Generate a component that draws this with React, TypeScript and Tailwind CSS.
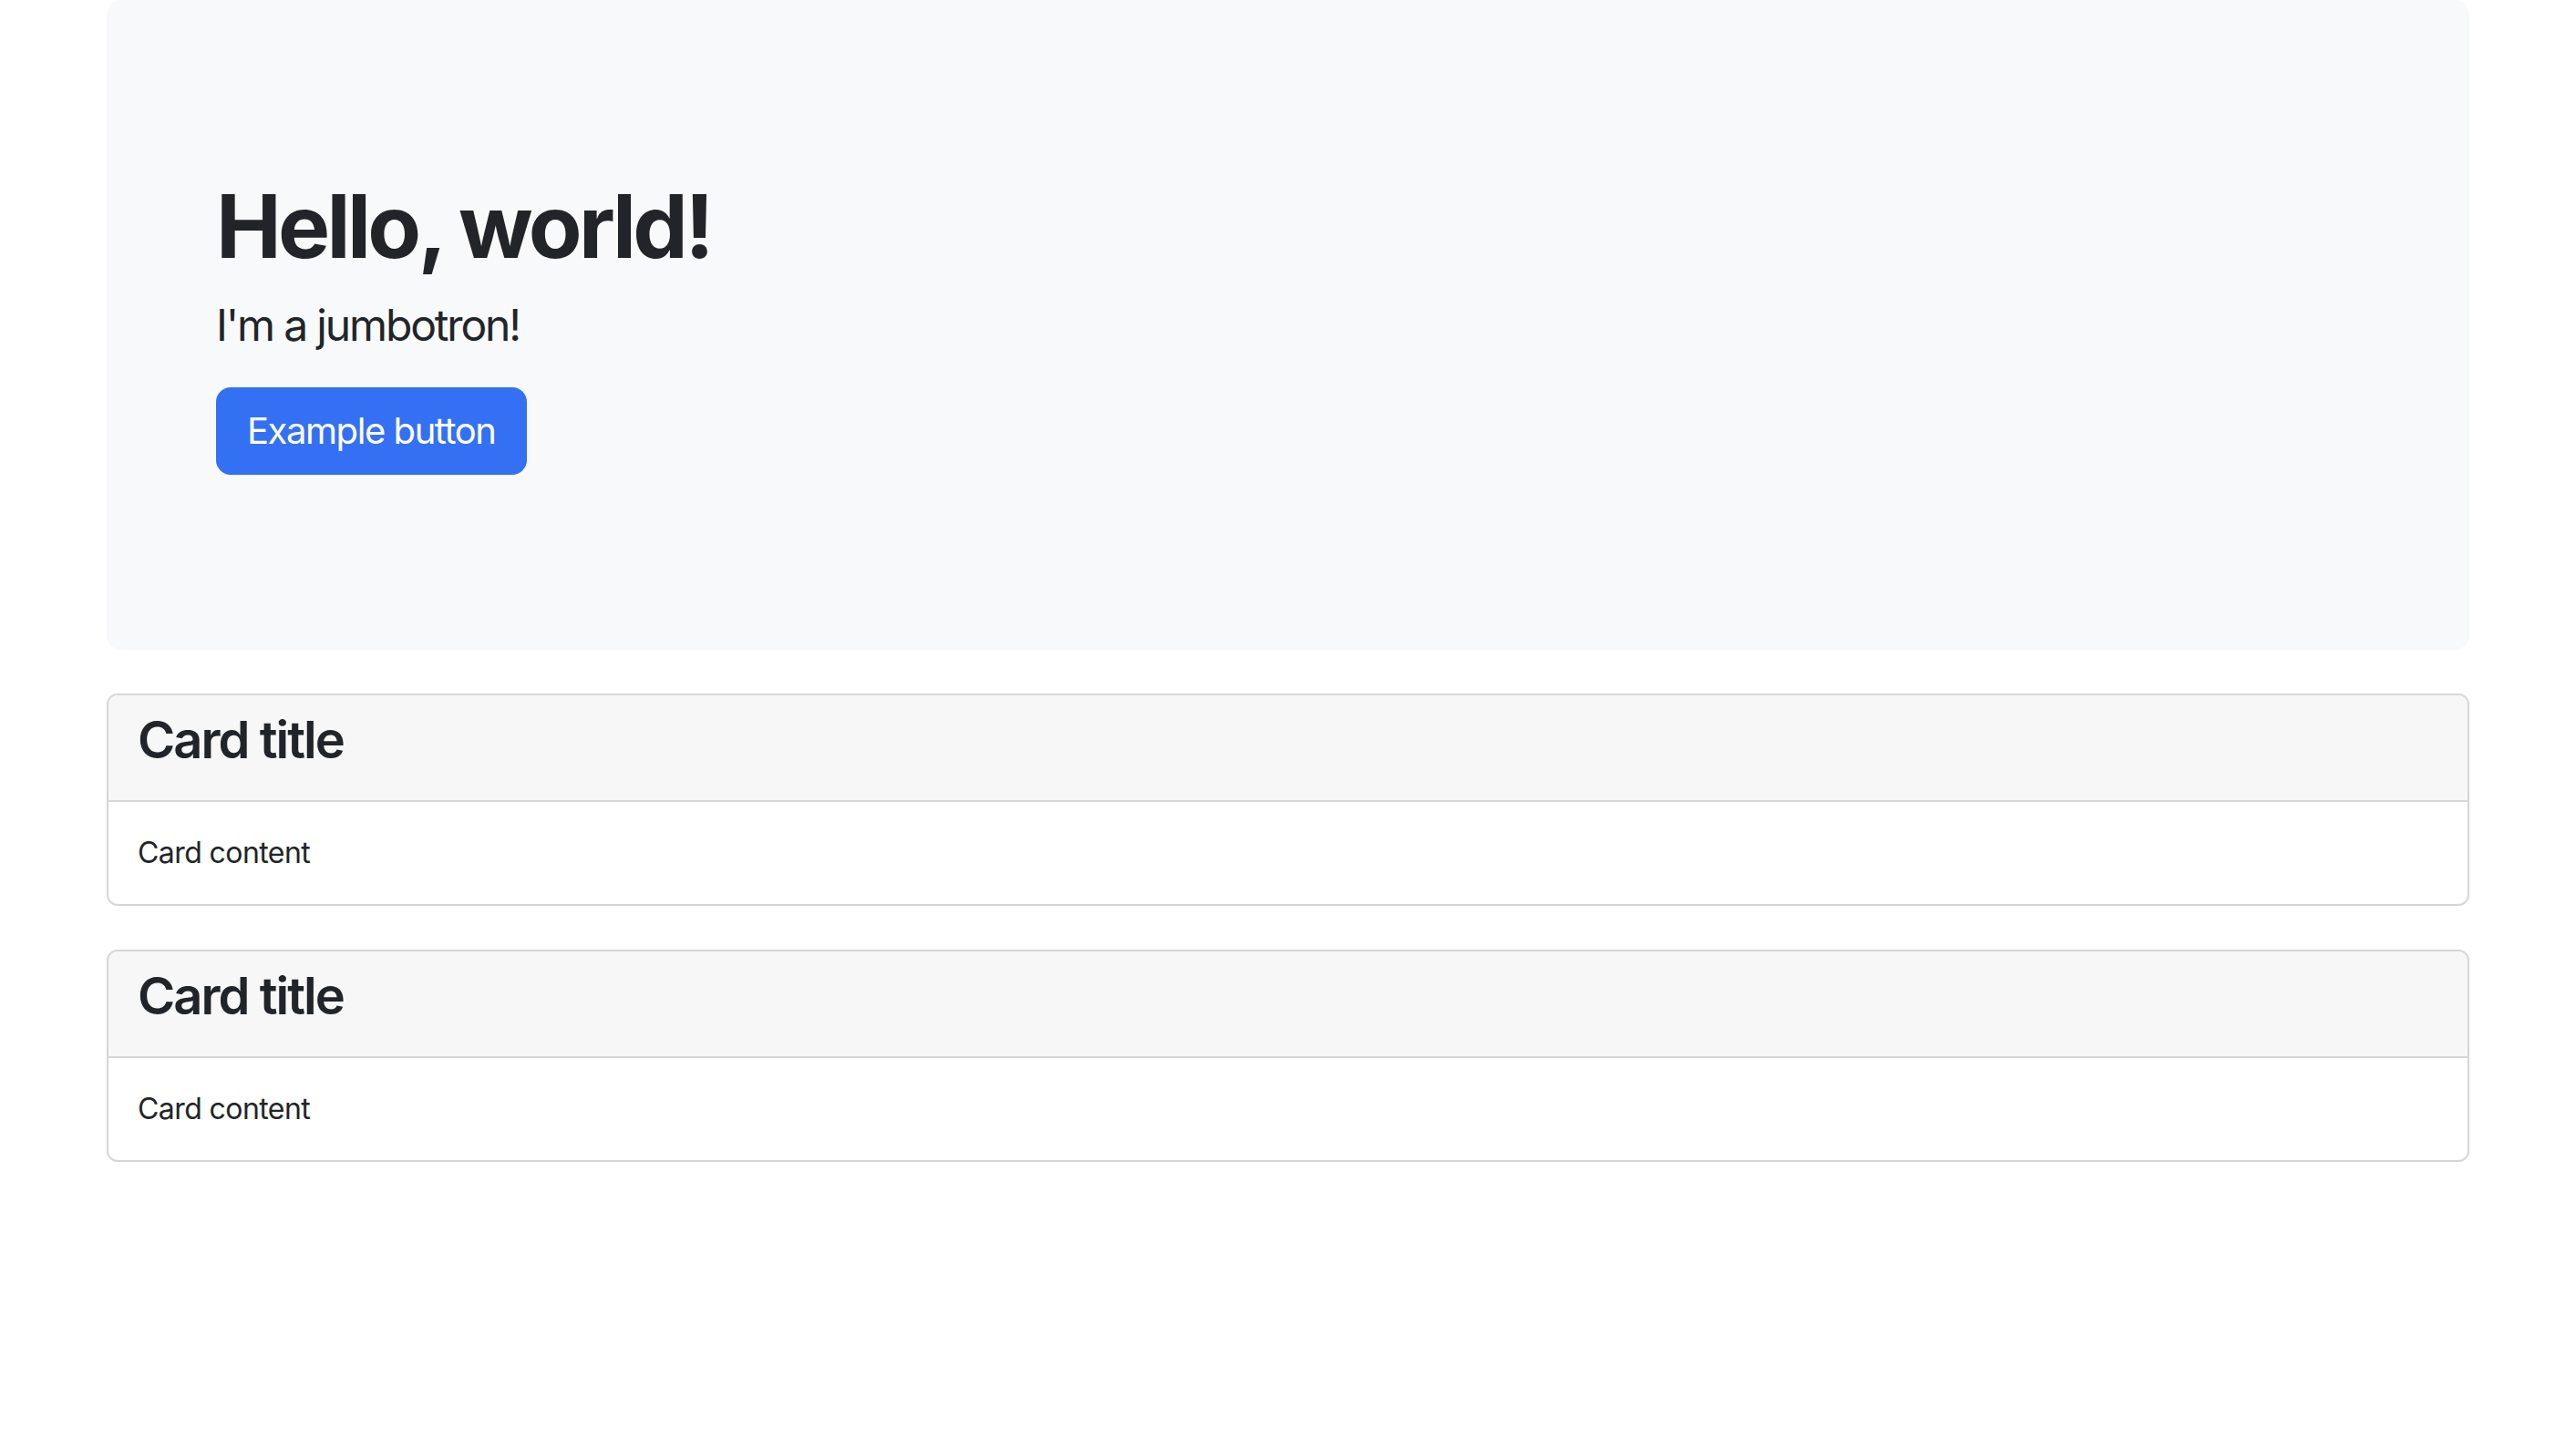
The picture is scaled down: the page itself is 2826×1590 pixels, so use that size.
export default function App() {
  const cards = ['Card title', 'Card title']

  return (
    <div className="min-h-screen bg-white text-[#212529] font-['Inter','Noto_Sans',sans-serif]">
      <div className="mx-auto w-[2640px] px-6">
        {/* jumbotron */}
        <div className="mb-12 rounded-2xl bg-[#f8f9fa] p-24">
          <div className="px-6 py-24">
            <h1 className="mb-4 text-[96px] leading-[113px] font-bold tracking-[-0.038em]">Hello, world!</h1>
            <p className="mb-8 text-[48px] leading-[1.5] tracking-[-0.045em]">I'm a jumbotron!</p>
            <button
              type="button"
              className="rounded-2xl border-2 border-[#3470f4] bg-[#3470f4] px-8 py-4 text-[40px] leading-[1.5] tracking-[-0.036em] text-white"
            >
              Example button
            </button>
          </div>
        </div>

        {cards.map((title, i) => (
          <div key={i} className="mb-12 overflow-hidden rounded-xl border-2 border-[#d6d6d6]">
            <div className="border-b-2 border-[#d6d6d6] bg-[#f7f7f7] px-8 py-4">
              <h3 className="mb-4 text-[56px] leading-[1.2] font-semibold tracking-[-0.035em]">{title}</h3>
            </div>
            <div className="p-8 text-[32px] leading-[1.5] tracking-[-0.018em]">Card content</div>
          </div>
        ))}
      </div>
    </div>
  )
}
